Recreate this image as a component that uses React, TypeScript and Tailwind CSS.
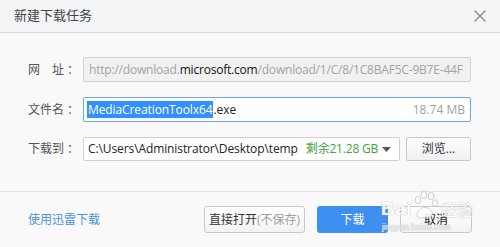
import React from "react";

export default function App() {
  const font = { fontFamily: '"Open Sans", "Noto Sans CJK SC", sans-serif' };
  return (
    <div className="w-[500px] h-[247px] bg-[#f9f9f9] text-[#333] overflow-hidden relative flex flex-col" style={font}>
      {/* title bar */}
      <div className="h-[33px] shrink-0 flex items-center justify-between pl-[14px] pr-[13px] bg-[#f3f4f6] border-b border-[#d6dbe1]">
        <span className="text-[13px] text-[#444]">新建下载任务</span>
        <svg width="14" height="14" viewBox="0 0 14 14" className="text-[#8a8a8a]">
          <path d="M1.5 1.5 L12.5 12.5 M12.5 1.5 L1.5 12.5" stroke="currentColor" strokeWidth="1.4" />
        </svg>
      </div>

      {/* form */}
      <div className="flex flex-col gap-[15px] pt-[24px] pl-[28px] pr-[29px]">
        <div className="flex items-center">
          <span className="w-[55px] shrink-0 text-[12px] text-[#555] whitespace-pre">
            网　址<span className="ml-[3px]">：</span>
          </span>
          <div className="flex-1 h-[25px] flex items-center px-[5px] bg-[#f1f1f1] border border-[#d2d2d2] rounded-[2px] overflow-hidden">
            <span className="text-[12px] whitespace-nowrap text-[#a3a3a3] tracking-[-0.2px]">
              http://download.<span className="text-[#111]">microsoft.com</span>/download/1/C/8/1C8BAF5C-9B7E-44F
            </span>
          </div>
        </div>
        <div className="flex items-center">
          <span className="w-[55px] shrink-0 text-[12px] text-[#555]">
            文件名<span className="ml-[3px]">：</span>
          </span>
          <div className="flex-1 h-[25px] flex items-center justify-between pl-[3px] pr-[5px] bg-white border border-[#6aa7ec] rounded-[2px]">
            <span className="text-[12px] whitespace-nowrap text-[#222]">
              <span className="bg-[#3390ff] text-white px-[1px] tracking-[-0.1px]">MediaCreationToolx64</span>.exe
            </span>
            <span className="text-[12px] text-[#a0a0a0]">18.74 MB</span>
          </div>
        </div>
        <div className="flex items-center">
          <span className="w-[55px] shrink-0 text-[12px] text-[#555]">
            下载到<span className="ml-[3px]">：</span>
          </span>
          <div className="w-[317px] h-[24px] flex items-center pl-[4px] pr-[8px] bg-white border border-[#cfcfcf] rounded-[2px] overflow-hidden">
            <span className="text-[12px] whitespace-nowrap text-[#222] tracking-[-0.1px]">C:\Users\Administrator\Desktop\temp</span>
            <span className="text-[12px] whitespace-nowrap text-[#3ea43e] ml-[8px] tracking-[-0.2px]">剩余21.28 GB</span>
            <svg width="9" height="5" viewBox="0 0 9 5" className="ml-auto shrink-0 text-[#555]">
              <path d="M0 0 H9 L4.5 5 Z" fill="currentColor" />
            </svg>
          </div>
          <button className="ml-[6px] w-[65px] h-[24px] flex items-center justify-center text-[12px] text-[#333] bg-gradient-to-b from-[#fdfdfd] to-[#f1f1f1] border border-[#c8c8c8] rounded-[2px]">
            浏览...
          </button>
        </div>
      </div>

      <div className="mt-[30px] border-t border-[#e2e2e2]" />

      {/* bottom */}
      <div className="flex items-center pt-[14px] pl-[28px] pr-[28px]">
        <span className="text-[12px] text-[#4a90e2]">使用迅雷下载</span>
        <button className="ml-auto w-[101px] h-[27px] flex items-center justify-center text-[12px] text-[#333] bg-gradient-to-b from-[#fefefe] to-[#f3f3f3] border border-[#c8c8c8] rounded-[3px]">
          直接打开<span className="text-[#a0a0a0]">(不保存)</span>
        </button>
        <button className="ml-[12px] w-[71px] h-[27px] flex items-center justify-center text-[12px] text-white bg-[#3d8ff1] rounded-[3px]">
          下载
        </button>
        <button className="ml-[12px] w-[72px] h-[27px] flex items-center justify-center text-[12px] text-[#222] bg-gradient-to-b from-[#fefefe] to-[#f3f3f3] border border-[#c8c8c8] rounded-[3px]">
          取消
        </button>
      </div>

      {/* watermark */}
      <div
        className="absolute left-[381px] top-[190px] pointer-events-none select-none text-white opacity-90"
        style={{ textShadow: "0 0 1px #b8b8b8, 0 0 1px #b8b8b8" }}
      >
        <div className="flex items-end leading-none">
          <span className="text-[19px] font-bold tracking-[0.5px]" style={{ fontFamily: '"Liberation Sans", sans-serif' }}>Bai</span>
          <svg width="28" height="30" viewBox="0 0 28 30" className="mb-[-2px]">
            <g fill="#fff" stroke="#bdbdbd" strokeWidth="0.8">
              <ellipse cx="6" cy="10" rx="2.8" ry="3.6" />
              <ellipse cx="12" cy="5" rx="2.8" ry="3.6" />
              <ellipse cx="19" cy="6" rx="2.8" ry="3.6" />
              <ellipse cx="23" cy="13" rx="2.6" ry="3.2" />
              <path d="M5 25 C7 16 16 15 20 22 C22 28 15 28 13 27 C11 28 4 29 5 25 Z" />
            </g>
          </svg>
          <span className="text-[16px] ml-[1px] mb-[1px]" style={{ fontFamily: '"Noto Sans CJK SC", sans-serif' }}>经验</span>
        </div>
        <div className="text-[8.5px] mt-[3px] ml-[1px] text-[#f2f2f2]" style={{ fontFamily: '"Liberation Sans", sans-serif' }}>jingyan.baidu.com</div>
      </div>
    </div>
  );
}
